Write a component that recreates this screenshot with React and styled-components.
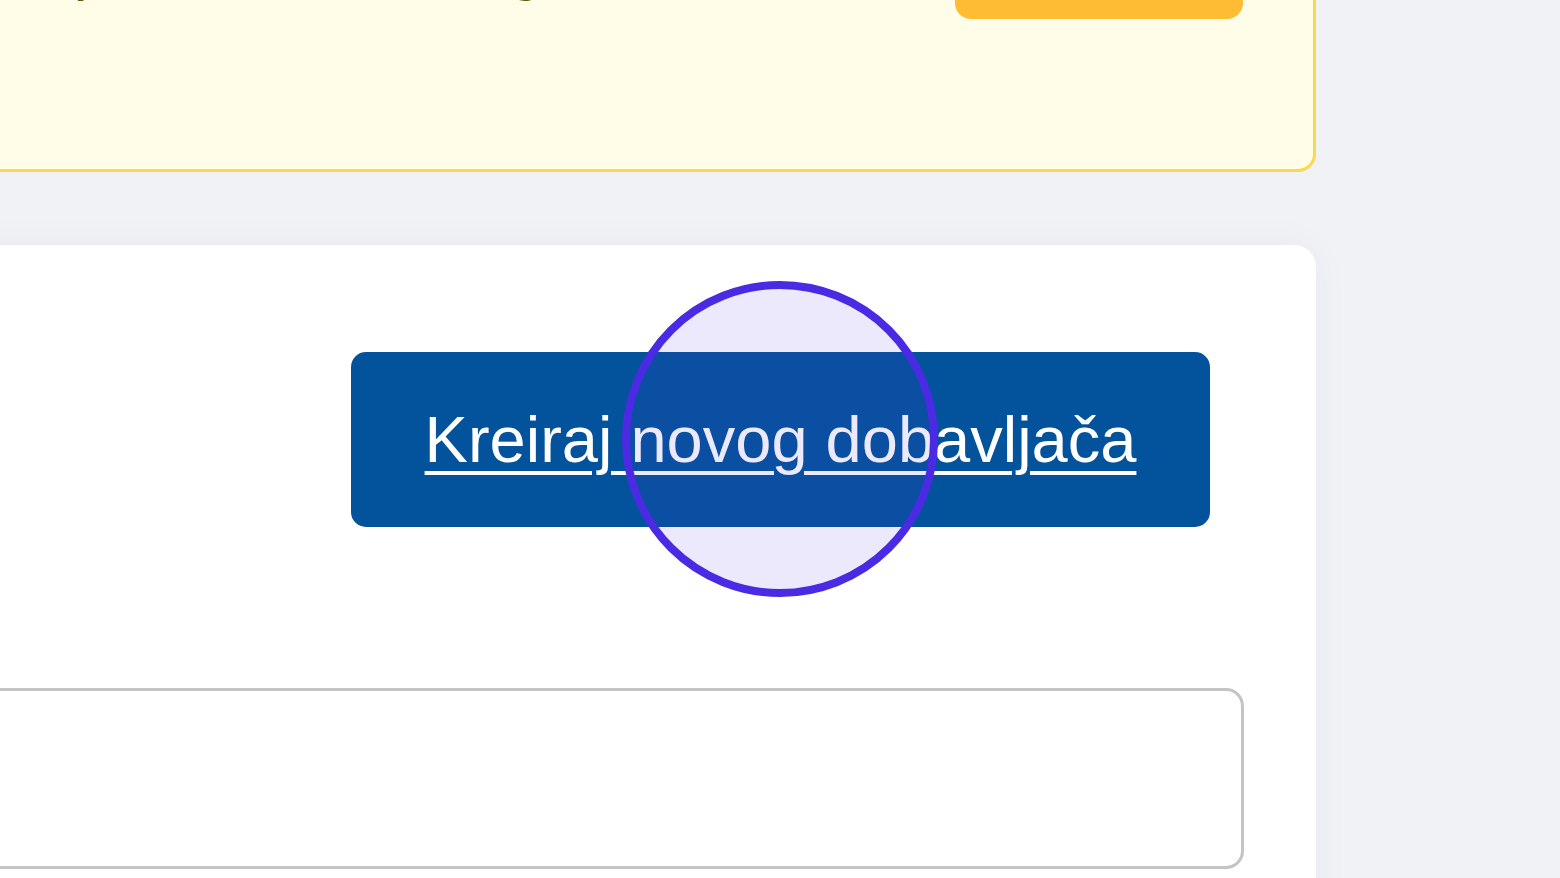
import React from 'react'
import styled, { createGlobalStyle } from 'styled-components'

const Global = createGlobalStyle`
    html, body {
        margin: 0;
        height: 100%;
        overflow: hidden;
        background: #f1f2f6;
        font-family: "Liberation Sans", Arial, sans-serif;
    }
`

const Page = styled.div`
    display: flex;
    justify-content: flex-end;
    padding-right: 244px;
    height: 878px;
    overflow: hidden;
`

const Column = styled.div`
    flex-shrink: 0;
    width: 1760px;
    display: flex;
    flex-direction: column;
    gap: 73px;
    margin-top: -138px;
`

const Notice = styled.div`
    flex-shrink: 0;
    display: flex;
    align-items: flex-end;
    justify-content: space-between;
    background: #fffce8;
    border: 3px solid #f7da4f;
    border-radius: 18px;
    padding: 0 70px 150px 470px;
    height: 310px;
    box-sizing: border-box;
`

const NoticeText = styled.p`
    margin: 0 0 21px;
    font-size: 62px;
    line-height: 1;
    color: #6a5a14;
    white-space: nowrap;
`

const NoticeButton = styled.div`
    flex-shrink: 0;
    width: 288px;
    height: 84px;
    background: #febb34;
    border-radius: 16px;
`

const Card = styled.div`
    flex-shrink: 0;
    background: #ffffff;
    border-radius: 22px 22px 0 0;
    padding: 107px 72px 0;
    height: 700px;
    box-shadow: 0 0 40px rgba(30, 40, 70, 0.04);
    display: flex;
    flex-direction: column;
    gap: 161px;
`

const Header = styled.div`
    display: flex;
    justify-content: flex-end;
    padding-right: 34px;
`

const CreateButton = styled.button`
    position: relative;
    width: 859px;
    height: 175px;
    background: #03539c;
    border: none;
    border-radius: 15px;
    color: #ffffff;
    font-family: "Liberation Sans", Arial, sans-serif;
    font-size: 65px;
    font-weight: 400;
    text-decoration: underline;
    text-decoration-thickness: 4px;
    text-underline-offset: 9px;
    padding: 0;
    cursor: pointer;
`

const ClickMarker = styled.span`
    position: absolute;
    left: 271px;
    top: -71px;
    width: 316px;
    height: 316px;
    box-sizing: border-box;
    border-radius: 50%;
    border: 8px solid #4a2ae2;
    background: rgba(82, 52, 230, 0.11);
    pointer-events: none;
`

const Field = styled.div`
    height: 181px;
    border: 3px solid #c4c4c4;
    border-radius: 18px;
    box-sizing: border-box;
    background: #ffffff;
`

export default function App() {
    return (
        <>
            <Global />
            <Page>
                <Column>
                    <Notice>
                        <NoticeText>Uputstvo za novog korisnika</NoticeText>
                        <NoticeButton />
                    </Notice>
                    <Card>
                        <Header>
                            <CreateButton>
                                Kreiraj novog dobavljača
                                <ClickMarker />
                            </CreateButton>
                        </Header>
                        <Field />
                    </Card>
                </Column>
            </Page>
        </>
    )
}
